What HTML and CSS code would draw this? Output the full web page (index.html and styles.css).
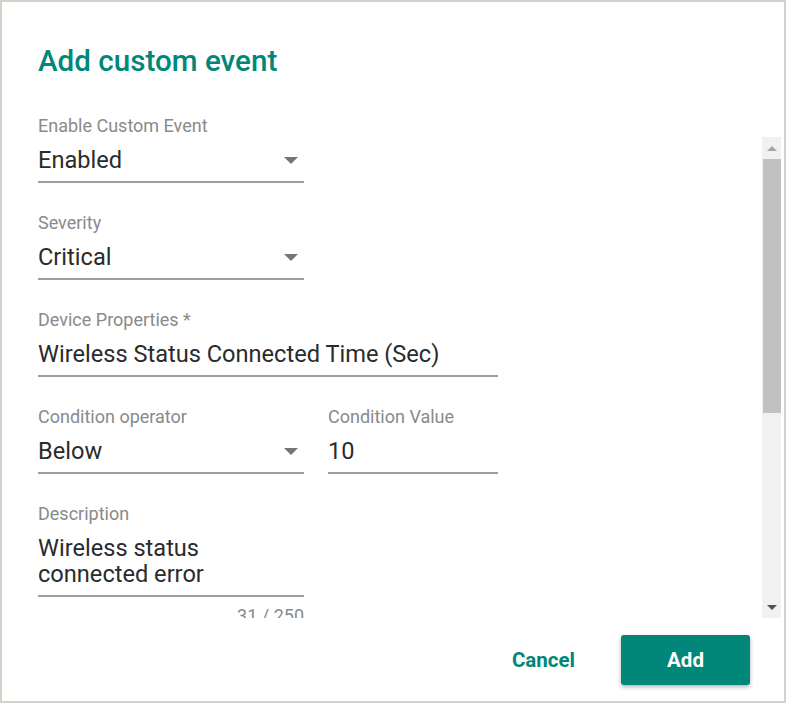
FILE: index.html
```html
<!DOCTYPE html>
<html>
<head>
<meta charset="utf-8">
<link rel="stylesheet" href="styles.css">
</head>
<body>
<div class="dialog">
  <h1 class="title">Add custom event</h1>
  <div class="body">
    <div class="form">
      <div class="field w-short">
        <div class="label">Enable Custom Event</div>
        <div class="control"><span class="value">Enabled</span><span class="arrow"></span></div>
      </div>
      <div class="field w-short">
        <div class="label">Severity</div>
        <div class="control"><span class="value">Critical</span><span class="arrow"></span></div>
      </div>
      <div class="field w-long">
        <div class="label">Device Properties *</div>
        <div class="control"><span class="value">Wireless Status Connected Time (Sec)</span></div>
      </div>
      <div class="row">
        <div class="field w-short">
          <div class="label">Condition operator</div>
          <div class="control"><span class="value">Below</span><span class="arrow"></span></div>
        </div>
        <div class="field w-value">
          <div class="label">Condition Value</div>
          <div class="control"><span class="value">10</span></div>
        </div>
      </div>
      <div class="field w-short textarea">
        <div class="label">Description</div>
        <div class="control"><span class="value">Wireless status<br>connected error</span></div>
        <div class="hint">31 / 250</div>
      </div>
    </div>
    <div class="scrollbar">
      <div class="sb-btn up"><span class="sb-arrow-up"></span></div>
      <div class="sb-thumb"></div>
      <div class="sb-track"></div>
      <div class="sb-btn down"><span class="sb-arrow-down"></span></div>
    </div>
  </div>
  <div class="actions">
    <button class="btn-text">Cancel</button>
    <button class="btn-primary">Add</button>
  </div>
</div>
</body>
</html>
```

FILE: styles.css
```css
* { box-sizing: border-box; }
html, body { margin: 0; padding: 0; background: #ffffff; }
body { font-family: Roboto, "Liberation Sans", sans-serif; }

.dialog {
  width: 786px;
  height: 703px;
  border: 2px solid #cdd4c9;
  background: #ffffff;
  display: flex;
  flex-direction: column;
}

.title {
  margin: 43px 0 0 36px;
  font-size: 29.6px;
  line-height: 32px;
  font-weight: 500;
  color: #008779;
}

.body {
  margin-top: 39px;
  height: 502px;
  display: flex;
  overflow: hidden;
}

.form {
  flex: 1;
  padding-left: 36px;
  overflow: hidden;
}

.row {
  display: flex;
  gap: 24px;
}

.field { margin-bottom: 30px; }
.w-short { width: 266px; }
.w-long { width: 460px; }
.w-value { width: 170px; }

.label {
  font-size: 18px;
  line-height: 20px;
  color: #8a8a8a;
}

.control {
  margin-top: 10px;
  padding-bottom: 7px;
  border-bottom: 2px solid #9e9e9e;
  display: flex;
  align-items: center;
}

.value {
  flex: 1;
  font-size: 23.6px;
  line-height: 28px;
  color: #2b2b2b;
}

.arrow {
  width: 0;
  height: 0;
  border-left: 7px solid transparent;
  border-right: 7px solid transparent;
  border-top: 7px solid #757575;
  margin-right: 6px;
}

.textarea .control { margin-top: 11px; padding-bottom: 8px; }
.textarea .value { line-height: 26px; }

.hint {
  margin-top: 9px;
  text-align: right;
  font-size: 18px;
  line-height: 20px;
  color: #8a8a8a;
}

.scrollbar {
  width: 19px;
  height: 481px;
  margin-top: 21px;
  margin-right: 3px;
  background: #f1f1f1;
  display: flex;
  flex-direction: column;
}

.sb-btn {
  height: 22px;
  display: flex;
  align-items: center;
  justify-content: center;
}
.sb-btn.down { height: 21px; }

.sb-arrow-up {
  width: 0; height: 0;
  border-left: 5px solid transparent;
  border-right: 5px solid transparent;
  border-bottom: 5px solid #a3a3a3;
}
.sb-arrow-down {
  width: 0; height: 0;
  border-left: 5px solid transparent;
  border-right: 5px solid transparent;
  border-top: 5px solid #505050;
}

.sb-thumb {
  height: 254px;
  margin-left: 1px;
  background: #c1c1c1;
}
.sb-track { flex: 1; }

.actions {
  margin-top: 17px;
  padding-right: 34px;
  display: flex;
  justify-content: flex-end;
  gap: 23px;
}

button {
  font-family: Roboto, "Liberation Sans", sans-serif;
  cursor: pointer;
}

.btn-text {
  height: 50px;
  padding: 0 23px;
  border: none;
  background: transparent;
  color: #008779;
  font-size: 20.5px;
  font-weight: 700;
}

.btn-primary {
  width: 129px;
  height: 50px;
  border: none;
  border-radius: 3px;
  background: #008779;
  color: #ffffff;
  font-size: 20.5px;
  font-weight: 700;
  box-shadow: 0 2px 4px rgba(0, 0, 0, 0.3);
}
```
